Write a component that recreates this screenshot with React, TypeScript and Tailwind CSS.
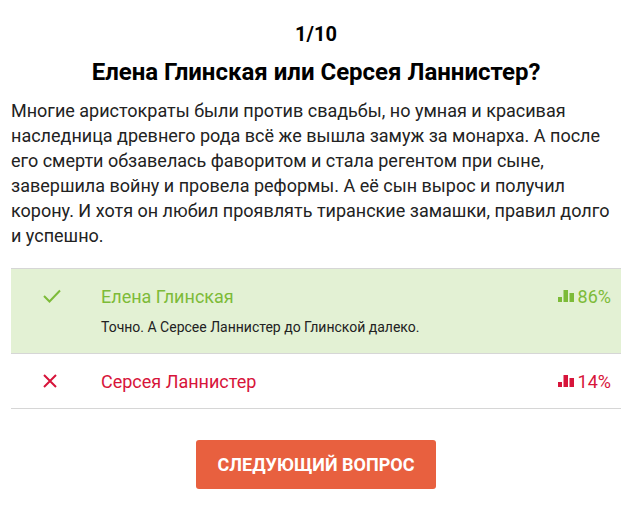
import React from "react";

function Bars({ color }: { color: string }) {
  return (
    <svg width="16" height="12" viewBox="0 0 16 12" className="mr-[4px]" aria-hidden>
      <rect x="0" y="7" width="4" height="5" fill={color} />
      <rect x="5.5" y="0" width="4.5" height="12" fill={color} />
      <rect x="11.5" y="3" width="4.5" height="9" fill={color} />
    </svg>
  );
}

export default function App() {
  return (
    <div
      className="w-[632px] min-h-[515px] bg-white px-[11px] pt-[22px] text-[#222]"
      style={{ fontFamily: "Roboto, 'Noto Sans', sans-serif" }}
    >
      <div className="text-center text-[20px] font-bold leading-[24px] text-black">1/10</div>
      <h1 className="mt-[11px] text-center text-[24px] font-bold leading-[30px] text-black">
        Елена Глинская или Серсея Ланнистер?
      </h1>
      <p className="mt-[11px] text-[18px] leading-[25px] text-[#222]">
        Многие аристократы были против свадьбы, но умная и красивая наследница древнего рода всё же вышла замуж за монарха. А после его смерти обзавелась фаворитом и стала регентом при сыне, завершила войну и провела реформы. А её сын вырос и получил корону. И хотя он любил проявлять тиранские замашки, правил долго и успешно.
      </p>

      <div className="mt-[20px] border-t border-[#d6d6d6]">
        <div className="bg-[#e3f1d4] pt-[15px] pb-[16px] border-b border-[#d6d6d6]">
          <div className="flex items-center h-[24px]">
            <div className="w-[90px] flex justify-start pl-[32px]">
              <svg width="18" height="14" viewBox="0 0 18 14" aria-hidden>
                <polyline points="1,7 6.5,12.5 17,1.5" fill="none" stroke="#7dbb38" strokeWidth="2" />
              </svg>
            </div>
            <div className="flex-1 text-[18px] text-[#7dbb38]">Елена Глинская</div>
            <div className="flex items-center pr-[10px] text-[18px] text-[#7dbb38]">
              <Bars color="#7dbb38" />
              86%
            </div>
          </div>
          <div className="mt-[9px] pl-[90px] text-[14px] leading-[20px] text-[#222]">
            Точно. А Серсее Ланнистер до Глинской далеко.
          </div>
        </div>
        <div className="pt-[15px] pb-[15px] border-b border-[#d6d6d6]">
          <div className="flex items-center h-[24px]">
            <div className="w-[90px] flex justify-start pl-[32px]">
              <svg width="14" height="14" viewBox="0 0 14 14" aria-hidden>
                <path d="M1 1 L13 13 M13 1 L1 13" fill="none" stroke="#d7143a" strokeWidth="2" />
              </svg>
            </div>
            <div className="flex-1 text-[18px] text-[#d7143a]">Серсея Ланнистер</div>
            <div className="flex items-center pr-[10px] text-[18px] text-[#d7143a]">
              <Bars color="#d7143a" />
              14%
            </div>
          </div>
        </div>
      </div>

      <div className="mt-[31px] flex justify-center">
        <button className="h-[49px] w-[240px] rounded-[3px] bg-[#e8603f] text-[18px] font-bold uppercase text-white">
          Следующий вопрос
        </button>
      </div>
    </div>
  );
}
